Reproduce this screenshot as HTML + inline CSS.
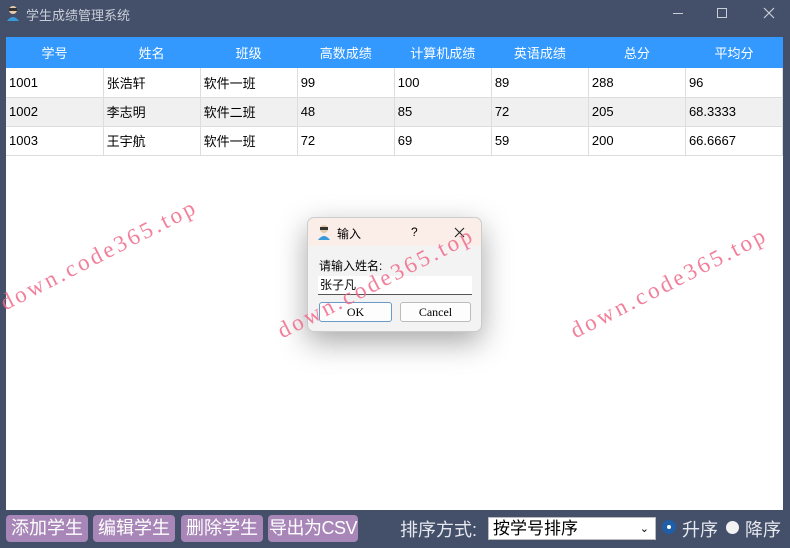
<!DOCTYPE html>
<html><head><meta charset="utf-8"><style>
*{margin:0;padding:0;box-sizing:border-box}
html,body{width:790px;height:548px;overflow:hidden}
body{background:#44506a;font-family:"Liberation Sans","Noto Sans CJK SC",sans-serif;position:relative}
.title{position:absolute;left:26px;top:5px;color:#c9ced8;font-size:13px}
.tbl{position:absolute;left:6px;top:37px;width:777px;height:473px;background:#fff}
table{border-collapse:collapse;width:777px;table-layout:fixed}
th{background:#3399ff;color:#fff;font-weight:normal;font-size:13px;height:31px}
td{height:29px;font-size:13px;padding-left:3px;border-right:1px solid #ddd;border-bottom:1px solid #ddd;color:#000}
tr.g td{background:#f0f0f0}
.dlg{position:absolute;left:307px;top:217px;width:175px;height:115px;background:#f3f3f3;border:1px solid #ccc;border-radius:7px;box-shadow:0 10px 30px rgba(0,0,0,.35)}
.dh{height:28px;background:#fbeee9;border-radius:7px 7px 0 0;font-size:12px;position:relative}
.btn{position:absolute;height:20px;border:1px solid #bbb;background:#fdfdfd;border-radius:3px;font-family:"Liberation Serif",serif;font-size:12px;text-align:center;line-height:18px}
.wm{position:absolute;color:#f06a8a;font-family:"Liberation Serif",serif;font-size:23px;letter-spacing:3px;transform-origin:left bottom;transform:rotate(-27deg);white-space:nowrap;opacity:.85}
.pb{position:absolute;top:515px;height:27px;background:#a887b8;border-radius:4px;color:#fff;font-size:18px;text-align:center;line-height:27px;white-space:nowrap;overflow:hidden;font-family:"Liberation Sans","Noto Sans CJK SC",sans-serif}
.lbl{position:absolute;top:516px;color:#e6e8ee;font-size:18px;white-space:nowrap;font-family:"Liberation Sans","Noto Sans CJK SC",sans-serif}
</style></head><body>
<svg style="position:absolute;left:6px;top:5px" width="14" height="16"><circle cx="7" cy="5" r="4" fill="#e8c9a8"/><rect x="3" y="3" width="8" height="3" fill="#333"/><path d="M1 16 Q7 8 13 16Z" fill="#3a9ad9"/></svg>
<div class="title">学生成绩管理系统</div>
<div style="position:absolute;left:673px;top:13px;width:10px;height:1px;background:#c9ced8"></div>
<div style="position:absolute;left:717px;top:8px;width:10px;height:10px;border:1px solid #c9ced8"></div>
<svg style="position:absolute;left:763px;top:7px" width="12" height="12"><path d="M1 1L11 11M11 1L1 11" stroke="#c9ced8" stroke-width="1.2"/></svg>
<div class="tbl"><table>
<tr><th>学号</th><th>姓名</th><th>班级</th><th>高数成绩</th><th>计算机成绩</th><th>英语成绩</th><th>总分</th><th>平均分</th></tr>
<tr><td>1001</td><td>张浩轩</td><td>软件一班</td><td>99</td><td>100</td><td>89</td><td>288</td><td>96</td></tr>
<tr class="g"><td>1002</td><td>李志明</td><td>软件二班</td><td>48</td><td>85</td><td>72</td><td>205</td><td>68.3333</td></tr>
<tr><td>1003</td><td>王宇航</td><td>软件一班</td><td>72</td><td>69</td><td>59</td><td>200</td><td>66.6667</td></tr>
</table></div>
<div class="dlg">
<div class="dh"><svg style="position:absolute;left:9px;top:6px" width="14" height="16"><circle cx="7" cy="5" r="4" fill="#e8c9a8"/><rect x="3" y="3" width="8" height="3" fill="#333"/><path d="M1 16 Q7 8 13 16Z" fill="#3a9ad9"/></svg>
<span style="position:absolute;left:29px;top:7px">输入</span><span style="position:absolute;left:103px;top:7px">?</span><svg style="position:absolute;left:146px;top:9px" width="11" height="11"><path d="M1 1L10 10M10 1L1 10" stroke="#222" stroke-width="1.1"/></svg></div>
<div style="position:absolute;left:11px;top:39px;font-size:12px">请输入姓名:</div>
<div style="position:absolute;left:10px;top:58px;width:154px;height:19px;background:#fff;border-bottom:1px solid #555;font-size:12px;padding-left:2px;line-height:19px">张子凡</div>
<div class="btn" style="left:11px;top:84px;width:73px;border-color:#6a9ac8">OK</div>
<div class="btn" style="left:92px;top:84px;width:71px">Cancel</div>
</div>
<div class="wm" style="left:8px;top:290px">down.code365.top</div>
<div class="wm" style="left:285px;top:318px">down.code365.top</div>
<div class="wm" style="left:578px;top:318px">down.code365.top</div>
<div class="pb" style="left:6px;width:82px">添加学生</div>
<div class="pb" style="left:93px;width:82px">编辑学生</div>
<div class="pb" style="left:181px;width:82px">删除学生</div>
<div class="pb" style="left:268px;width:90px;letter-spacing:-0.5px">导出为CSV</div>
<div class="lbl" style="left:400px">排序方式:</div>
<div style="position:absolute;left:488px;top:517px;width:168px;height:23px;background:#fff;border:1px solid #bbb;font-size:17px;padding-left:4px;line-height:22px;white-space:nowrap;font-family:'Liberation Sans','Noto Sans CJK SC',sans-serif">按学号排序<span style="position:absolute;right:6px;top:0;font-size:11px">⌄</span></div>
<div style="position:absolute;left:662px;top:520px;width:14px;height:14px;border-radius:50%;background:#1f5ea8"><div style="margin:5px;width:4px;height:4px;border-radius:50%;background:#fff"></div></div>
<div class="lbl" style="left:682px">升序</div>
<div style="position:absolute;left:726px;top:521px;width:13px;height:13px;border-radius:50%;background:#f3f3f3"></div>
<div class="lbl" style="left:745px">降序</div>
</body></html>
